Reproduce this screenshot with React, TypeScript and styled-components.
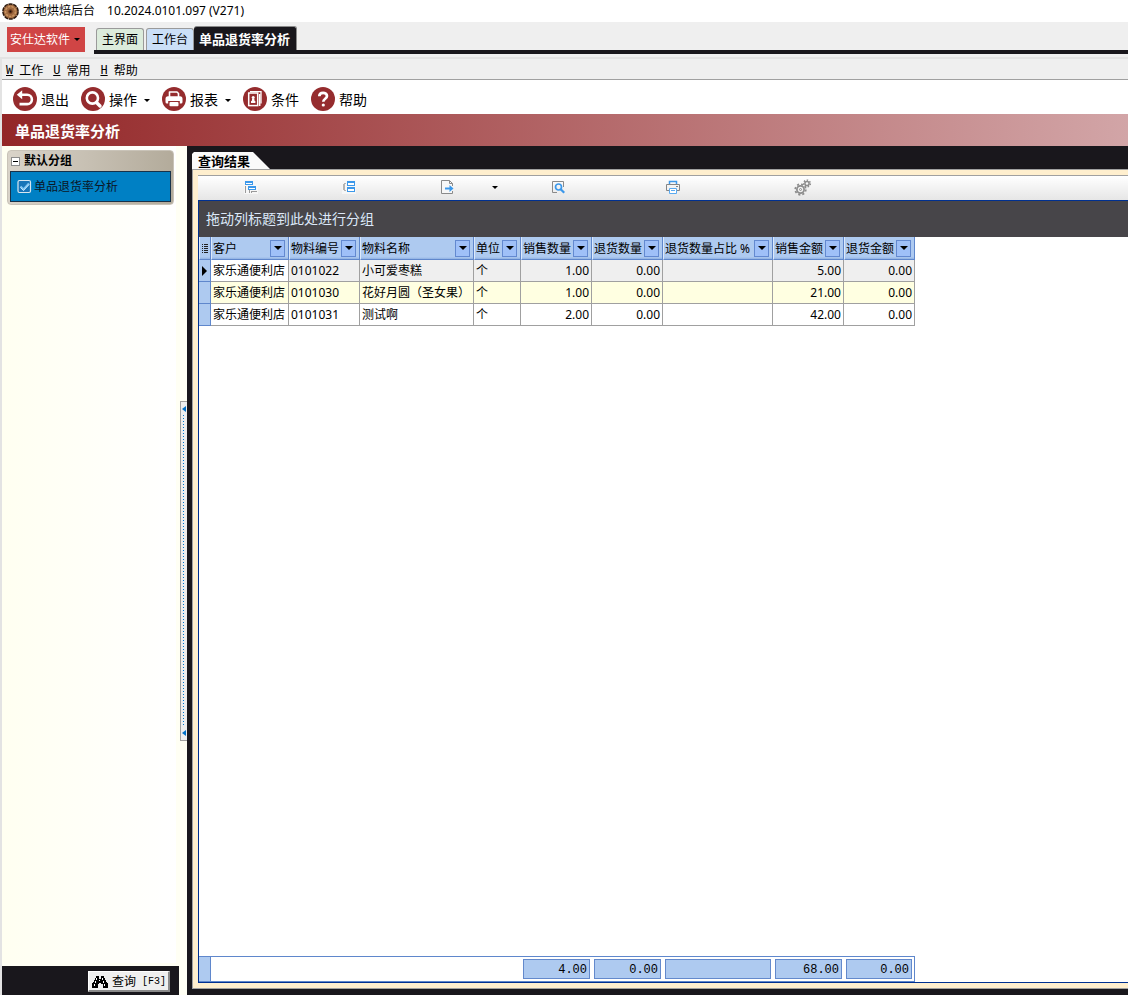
import React from "react";
import styled, { createGlobalStyle } from "styled-components";

const ui = '"Noto Sans", "Noto Sans CJK SC", sans-serif';
const mono = '"Liberation Mono", "Noto Sans CJK SC", monospace';
const ink = "#19171c";

const GlobalStyle = createGlobalStyle`
  *, *::before, *::after { box-sizing: border-box; }
  body { margin: 0; background: #fff; font-family: ${ui}; font-size: 12px; line-height: 16px; color: #000; }
  button { margin: 0; padding: 0; border: 0; background: none; font: inherit; color: inherit; white-space: nowrap; }
  a { color: inherit; text-decoration: none; }
  svg { display: block; flex: none; }
`;

const Window = styled.div`
  display: flex;
  flex-direction: column;
  min-height: 100vh;
  overflow: hidden;
`;

const TitleBar = styled.header`
  display: flex;
  align-items: center;
  gap: 4px;
  height: 22px;
  padding: 0 0 0 2px;
`;

const Version = styled.span`
  margin-left: 8px;
`;

const TabStrip = styled.div`
  display: flex;
  height: 35px;
  background: #efefef;
  padding: 4px 0 3px 7px;
`;

const BrandButton = styled.button`
  display: flex;
  align-items: center;
  gap: 4px;
  height: 25px;
  margin: 1px 9px 0 0;
  padding: 0 5px 0 3px;
  background: #d04545;
  color: #fff;
`;

const Tabs = styled.nav`
  display: flex;
  align-items: flex-end;
  flex: 1;
  gap: 2px;
  padding-left: 2px;
  border-bottom: 4px solid ${ink};
`;

const WindowTab = styled.button<{ $tint: string }>`
  height: 22px;
  width: 48px;
  border: 1px solid #9a9a9a;
  border-bottom: 0;
  border-radius: 3px 3px 0 0;
  background: ${(p) => p.$tint};
`;

const ActiveTab = styled.button`
  height: 24px;
  margin-left: -2px;
  padding: 0 6px 0 5px;
  border-top: 1px solid #8a8a8a;
  border-right: 1px solid #8a8a8a;
  border-radius: 3px 3px 0 0;
  background: ${ink};
  color: #fff;
  font-size: 13px;
  font-weight: 700;
  line-height: 22px;
`;

const Frame = styled.div`
  display: flex;
  flex-direction: column;
  flex: 1;
  border-top: 2px solid #e3e3e3;
  border-left: 2px solid #e3e3e3;
`;

const MenuBar = styled.nav`
  display: flex;
  align-items: center;
  gap: 10px;
  height: 21px;
  padding: 3px 0 0 4px;
  background: #efefef;
  border-bottom: 1px solid #a0a0a0;
`;

const MenuItem = styled.button`
  display: flex;
  align-items: center;
  gap: 6px;

  u { font-family: ${mono}; font-size: 12px; }
`;

const Toolbar = styled.div`
  display: flex;
  align-items: center;
  gap: 12px;
  height: 34px;
  padding: 4px 0 0 11px;
  font-size: 14px;
`;

const ToolButton = styled.button`
  display: flex;
  align-items: center;
  gap: 4px;
  line-height: 20px;

  span { padding-top: 2px; }
`;

const Caret = styled.i<{ $wide?: boolean }>`
  width: 0;
  height: 0;
  border: solid transparent;
  border-width: ${(p) => (p.$wide ? "4px 4px 0" : "3px 3px 0")};
  border-top-color: #000;
`;

const ToolCaret = styled(Caret)`
  margin: 3px 0 0 3px;
`;

const PageTitle = styled.h1`
  margin: 0;
  padding: 0 13px;
  height: 32px;
  line-height: 34px;
  font-size: 15px;
  font-weight: 700;
  color: #fff;
  background: linear-gradient(90deg, #932627, #d2a5a7);
`;

const Body = styled.div`
  display: flex;
  flex: 1;
`;

const Sidebar = styled.aside`
  display: flex;
  width: 185px;
  flex: none;
  background: #fffff4;
`;

const SideColumn = styled.div`
  display: flex;
  flex-direction: column;
  width: 177px;
`;

const SideList = styled.div`
  flex: 1;
  margin: 0 3px 3px 0;
  padding: 4px 2px 0 5px;
  background: linear-gradient(90deg, #fffff1, #ffffff);
`;

const Group = styled.section`
  padding: 0 2px 2px;
  border: 1px solid #c9c3b8;
  border-radius: 4px;
  background: linear-gradient(90deg, #d9d3c9, #b3ab9b);
`;

const GroupHeader = styled.button`
  display: flex;
  align-items: center;
  gap: 4px;
  height: 20px;
  padding-left: 1px;
  font-weight: 700;
`;

const GroupLink = styled.a`
  display: flex;
  align-items: center;
  gap: 2px;
  height: 31px;
  padding-left: 6px;
  border: 1px solid #17324a;
  background: #0080c4;
  color: #0b1626;
`;

const SideFooter = styled.footer`
  display: flex;
  justify-content: flex-end;
  align-items: flex-start;
  height: 29px;
  padding: 5px 9px 0 0;
  background: ${ink};
`;

const QueryButton = styled.button`
  display: flex;
  align-items: center;
  gap: 4px;
  height: 21px;
  padding: 1px 2px 0 3px;
  background: #efefef;
  border: 1px solid #fff;
  border-right: 2px solid #8a8a8a;
  border-bottom: 2px solid #8a8a8a;

  kbd { font-family: ${mono}; font-size: 10px; margin-left: 2px; }
`;

const Splitter = styled.button`
  display: flex;
  flex-direction: column;
  align-items: center;
  align-self: center;
  width: 7px;
  height: 340px;
  margin-left: 1px;
  padding: 4px 0;
  border: 1px solid #a0a0a0;
  border-right: 0;
  background: #efefef;
`;

const SplitDots = styled.span`
  flex: 1;
  width: 1px;
  margin: 3px 1px 3px 0;
  background: repeating-linear-gradient(180deg, #0078d0 0 1px, transparent 1px 3px);
`;

const SplitArrow = styled.i`
  border: solid transparent;
  border-width: 3px 4px 3px 0;
  border-right-color: #0070c8;
`;

const Main = styled.main`
  display: flex;
  flex-direction: column;
  flex: 1;
  min-width: 0;
  padding: 6px 0 6px 5px;
  background: ${ink};
`;

const ResultTab = styled.button`
  align-self: flex-start;
  width: 78px;
  height: 17px;
  padding-left: 6px;
  text-align: left;
  font-size: 13px;
  font-weight: 700;
  background: #fafafa;
  clip-path: polygon(0 2px, 2px 0, 61px 0, 78px 17px, 0 17px);
`;

const Panel = styled.section`
  display: flex;
  flex-direction: column;
  flex: 1;
  padding: 5px 0 5px 5px;
  border: 1px solid #a0a0a0;
  border-right: 0;
  background: #ffefce;
`;

const GridTools = styled.div`
  display: flex;
  align-items: center;
  height: 25px;
  border-top: 1px solid #a0a0a0;
  background: linear-gradient(180deg, #fff, #e6e6e6);
`;

const GridTool = styled.button<{ $gap: number }>`
  display: flex;
  justify-content: center;
  min-width: 8px;
  margin: 0 0 2px ${(p) => p.$gap}px;
`;

const Grid = styled.div`
  display: flex;
  flex-direction: column;
  flex: 1;
  border: 1px solid #003090;
  border-right: 0;
  background: #fff;
`;

const GroupDrop = styled.div`
  height: 36px;
  padding-left: 7px;
  line-height: 36px;
  font-size: 14px;
  color: #dce8f8;
  background: #474549;
`;

const Table = styled.table`
  width: 716px;
  table-layout: fixed;
  border-collapse: separate;
  border-spacing: 0;
`;

const HeadCell = styled.th`
  height: 23px;
  padding: 0 3px 0 1px;
  border-left: 1px solid #dce9fb;
  border-right: 1px solid #5f87cc;
  border-bottom: 1px solid #5f87cc;
  background: linear-gradient(180deg, #aecaf0 20px, #8fb0e2 22px);
  font-weight: 400;
  text-align: left;
`;

const HeadInner = styled.div`
  display: flex;
  align-items: center;
  justify-content: space-between;
  white-space: nowrap;

  span { padding-top: 1px; }
`;

const FilterButton = styled.button`
  display: flex;
  align-items: center;
  justify-content: center;
  flex: none;
  width: 15px;
  height: 17px;
  border: 1px solid #6389d0;
  background: #9fc0f8;
`;

const Marker = styled.td`
  height: 22px;
  padding: 0 0 0 3px;
  border-right: 1px solid #5f87cc;
  border-bottom: 1px solid #5f87cc;
  background: #aecaf0;
`;

const RowArrow = styled.i`
  display: block;
  width: 0;
  border: solid transparent;
  border-width: 5px 0 5px 5px;
  border-left-color: #000;
`;

const Row = styled.tr<{ $tone: string }>`
  background: ${(p) => p.$tone};
`;

const Cell = styled.td<{ $num?: boolean; $focus?: boolean }>`
  height: 22px;
  padding: 0 2px;
  border-right: 1px solid #a0a0a0;
  border-bottom: 1px solid #a0a0a0;
  text-align: ${(p) => (p.$num ? "right" : "left")};
  white-space: nowrap;
  overflow: hidden;
  ${(p) => p.$focus && "background: #fff;"}
`;

const Totals = styled(Table)`
  margin-top: auto;
  border: solid #5f87cc;
  border-width: 1px 0;
`;

const TotalMarker = styled.td`
  border-right: 1px solid #5f87cc;
  background: #aecaf0;
`;

const TotalCell = styled.td`
  height: 24px;
  padding: 0 2px;

  &:last-child { border-right: 1px solid #5f87cc; }
`;

const Total = styled.output`
  display: block;
  height: 20px;
  padding-right: 2px;
  border: 1px solid #6389cc;
  background: #aecaf0;
  font-family: ${mono};
  line-height: 20px;
  text-align: right;
`;

const columns = [
  { title: "客户", width: 78 },
  { title: "物料编号", width: 71 },
  { title: "物料名称", width: 114 },
  { title: "单位", width: 47 },
  { title: "销售数量", width: 71, total: "4.00" },
  { title: "退货数量", width: 71, total: "0.00" },
  { title: "退货数量占比 %", width: 110, total: "" },
  { title: "销售金额", width: 71, total: "68.00" },
  { title: "退货金额", width: 71, total: "0.00" },
];

const rows = [
  { tone: "#efefef", cells: ["家乐通便利店", "0101022", "小可爱枣糕", "个", "1.00", "0.00", "", "5.00", "0.00"] },
  { tone: "#ffffe1", cells: ["家乐通便利店", "0101030", "花好月圆（圣女果）", "个", "1.00", "0.00", "", "21.00", "0.00"] },
  { tone: "#ffffff", cells: ["家乐通便利店", "0101031", "测试啊", "个", "2.00", "0.00", "", "42.00", "0.00"] },
];

const Columns = () => (
  <colgroup>
    <col width={12} />
    {columns.map((c) => (
      <col key={c.title} width={c.width} />
    ))}
  </colgroup>
);

const BreadIcon = () => (
  <svg width="17" height="17" viewBox="0 0 17 17">
    <circle cx="8.5" cy="8.5" r="7.6" fill="#a06a40" stroke="#2a170c" strokeWidth="1.5" strokeDasharray="4 .8" />
    <circle cx="8.5" cy="8.5" r="5" fill="none" stroke="#c8935f" strokeWidth="1.6" strokeDasharray="2.4 1" />
    <circle cx="8.5" cy="8.5" r="2.2" fill="#6b3a1c" />
    <circle cx="8.5" cy="8.5" r=".9" fill="#1c0d05" />
  </svg>
);

const Disc = ({ children }: { children: React.ReactNode }) => (
  <svg width="24" height="24" viewBox="0 0 24 24" fill="none">
    <circle cx="12" cy="12" r="12" fill="#952c2e" />
    {children}
  </svg>
);

const BackIcon = () => (
  <Disc>
    <path d="M8 7.7h6.200a4.700 4.700 0 0 1 0 9.400H6.500" stroke="#fff" strokeWidth="2.6" />
    <path d="M3.800 7.700l5.400-4.500v9z" fill="#fff" />
  </Disc>
);

const SearchIcon = () => (
  <Disc>
    <circle cx="11.4" cy="11" r="5.6" stroke="#fff" strokeWidth="2.6" />
    <path d="M15.500 15.500l3.500 3.500" stroke="#fff" strokeWidth="3.4" strokeLinecap="round" />
  </Disc>
);

const PrinterIcon = () => (
  <Disc>
    <path d="M7.500 10V5h7.500l1.500 1.500V10" stroke="#fff" strokeWidth="1.600" strokeLinejoin="round" />
    <path d="M6 9.200h12a2.500 2.500 0 0 1 2.500 2.500V15a1.500 1.500 0 0 1-1.500 1.500h-1.200V14H6.200v2.500H5A1.500 1.500 0 0 1 3.500 15v-3.300A2.500 2.500 0 0 1 6 9.200z" fill="#fff" />
    <rect x="7.500" y="15" width="9" height="4.200" rx="1" fill="#fff" />
  </Disc>
);

const CardIcon = () => (
  <Disc>
    <rect x="5.700" y="6" width="9" height="12.600" stroke="#fff" strokeWidth="1.500" />
    <path d="M7 4.600h11v12" stroke="#fff" strokeWidth="1.300" />
    <path d="M16.700 7v12" stroke="#fff" strokeWidth="1.500" />
    <circle cx="10.200" cy="10.400" r="1.500" fill="#fff" />
    <path d="M9 12h2.400v1.500l1 .8V16H8v-1.700l1-.8z" fill="#fff" />
  </Disc>
);

const HelpIcon = () => (
  <Disc>
    <path d="M8.300 9.200C8.300 4.700 16 4.900 16 9c0 2.800-3.700 2.700-3.700 5.700" stroke="#fff" strokeWidth="2.700" />
    <circle cx="12.300" cy="18" r="1.600" fill="#fff" />
  </Disc>
);

const MinusBox = () => (
  <svg width="9" height="9" viewBox="0 0 9 9" shapeRendering="crispEdges">
    <rect x=".5" y=".5" width="8" height="8" fill="#fff" stroke="#8c8c8c" />
    <path d="M2 4.500h5" stroke="#000" />
  </svg>
);

const CheckIcon = () => (
  <svg width="15" height="15" viewBox="0 0 15 15" fill="none">
    <rect x="1" y="1.500" width="12.500" height="12" rx="1.500" fill="#1874b8" stroke="#d9e6ef" strokeWidth="1.200" />
    <path d="M3.500 7.500l3 3 5.500-6" stroke="#7cc4f4" strokeWidth="2.200" />
    <path d="M3.500 8.500l3 3 5.500-6" stroke="#e8f4fc" strokeWidth=".7" />
  </svg>
);

const BinocularsIcon = () => (
  <svg width="16" height="14" viewBox="0 0 16 14" shapeRendering="crispEdges">
    <path d="M4 1h3v3h2V1h3v2h1v2h1v2h1v1h1v5h-5V9H9V8H7v1H6v4H0V8h1V7h1V5h1V3h1z" fill="#000" />
    <path d="M4.500 3v2M3.500 6v2M2.500 9v2M10.500 3v2M11.500 6v2M12.500 9v2M7.500 5v1" stroke="#fff" />
  </svg>
);

const ExpandIcon = () => (
  <svg width="16" height="16" viewBox="0 0 16 16" shapeRendering="crispEdges">
    <path d="M1 1h14v14H1z" fill="#f7f7f7" />
    <path d="M2 2h8v4H2zM5 7h8v4H5z" fill="#3c98ea" />
    <path d="M3 4h6v1H3zM6 9h6v1H6z" fill="#fff" />
    <path d="M2 7h1v7H2zM6 11h1v3H6zM9 12h5v1H9zM8 12h1v2H8z" fill="#9a9a9a" />
  </svg>
);

const CollapseIcon = () => (
  <svg width="16" height="16" viewBox="0 0 16 16" shapeRendering="crispEdges">
    <path d="M1 1h14v14H1z" fill="#f7f7f7" />
    <path d="M6 2h8v5H6zM6 8h8v5H6z" fill="#3c98ea" />
    <path d="M7 4h6v2H7zM7 10h6v2H7z" fill="#fff" />
    <path d="M3 4h2v1H4v6h1v1H3V11H2V5h1z" fill="#b4b4b4" />
  </svg>
);

const ExportIcon = () => (
  <svg width="16" height="16" viewBox="0 0 16 16" fill="none">
    <path d="M13.500 7V4.500l-3-3h-8v13h11V12" fill="#f7f7f7" stroke="#8a8a8a" />
    <path d="M10.500 1.500v3h3" stroke="#8a8a8a" />
    <path d="M6 9.500h6" stroke="#3c98ea" strokeWidth="2" />
    <path d="M10.500 6l4 3.500-4 3.500z" fill="#3c98ea" />
  </svg>
);

const PreviewIcon = () => (
  <svg width="16" height="16" viewBox="0 0 16 16" fill="none">
    <path d="M13.500 8V2.500h-11v11H7" stroke="#8a8a8a" />
    <circle cx="8.500" cy="8" r="3" stroke="#3c98ea" strokeWidth="1.700" />
    <path d="M10.700 10.200l3.500 3.500" stroke="#3c98ea" strokeWidth="2.200" />
  </svg>
);

const PrintIcon = () => (
  <svg width="16" height="16" viewBox="0 0 16 16" fill="none">
    <path d="M4.500 5V2.500h7V5" stroke="#3c98ea" strokeWidth="1.500" />
    <path d="M4 11.500H1.500v-6h13v6H12" stroke="#858585" />
    <path d="M4.500 9.500h7v5h-7z" fill="#fff" stroke="#5aaaf0" />
    <path d="M6 11.500h4" stroke="#5aaaf0" />
    <path d="M11 7.500h2" stroke="#858585" />
  </svg>
);

const GearsIcon = () => (
  <svg width="18" height="17" viewBox="0 0 18 17" fill="none" stroke="#8c8c8c">
    <circle cx="6.500" cy="10.500" r="3.600" strokeWidth="1.700" />
    <circle cx="6.500" cy="10.500" r="5.300" strokeWidth="1.700" strokeDasharray="2.100 2.060" />
    <circle cx="6.500" cy="10.500" r="1" />
    <circle cx="13" cy="4.500" r="2.100" strokeWidth="1.500" />
    <circle cx="13" cy="4.500" r="3.400" strokeWidth="1.400" strokeDasharray="1.500 1.550" />
  </svg>
);

const ListGlyph = () => (
  <svg width="8" height="11" viewBox="0 0 8 11" shapeRendering="crispEdges">
    <path d="M1 1.500h1M3 1.500h4M1 3.500h1M3 3.500h4M1 5.500h1M3 5.500h4M1 7.500h1M3 7.500h4M1 9.500h1M3 9.500h4" stroke="#222" />
  </svg>
);

const menus = [
  ["W", "工作"],
  ["U", "常用"],
  ["H", "帮助"],
];

const tools = [
  { label: "退出", icon: <BackIcon /> },
  { label: "操作", icon: <SearchIcon />, menu: true },
  { label: "报表", icon: <PrinterIcon />, menu: true },
  { label: "条件", icon: <CardIcon /> },
  { label: "帮助", icon: <HelpIcon /> },
];

const gridTools = [
  { name: "展开", gap: 45, icon: <ExpandIcon /> },
  { name: "收起", gap: 82, icon: <CollapseIcon /> },
  { name: "导出", gap: 82, icon: <ExportIcon /> },
  { name: "导出选项", gap: 36, icon: <Caret /> },
  { name: "预览", gap: 51, icon: <PreviewIcon /> },
  { name: "打印", gap: 99, icon: <PrintIcon /> },
  { name: "设置", gap: 113, icon: <GearsIcon /> },
];

export default function App() {
  return (
    <Window>
      <GlobalStyle />
      <TitleBar>
        <BreadIcon />
        <span>本地烘焙后台</span>
        <Version>10.2024.0101.097 (V271)</Version>
      </TitleBar>
      <TabStrip>
        <BrandButton type="button">
          安仕达软件
          <Caret />
        </BrandButton>
        <Tabs>
          <WindowTab type="button" $tint="#dcecdc">主界面</WindowTab>
          <WindowTab type="button" $tint="#cbdff7">工作台</WindowTab>
          <ActiveTab type="button">单品退货率分析</ActiveTab>
        </Tabs>
      </TabStrip>
      <Frame>
        <MenuBar>
          {menus.map(([key, label]) => (
            <MenuItem type="button" key={key}>
              <u>{key}</u>
              {label}
            </MenuItem>
          ))}
        </MenuBar>
        <Toolbar>
          {tools.map((t) => (
            <ToolButton type="button" key={t.label}>
              {t.icon}
              <span>{t.label}</span>
              {t.menu && <ToolCaret />}
            </ToolButton>
          ))}
        </Toolbar>
        <PageTitle>单品退货率分析</PageTitle>
        <Body>
          <Sidebar>
            <SideColumn>
              <SideList>
                <Group>
                  <GroupHeader type="button">
                    <MinusBox />
                    默认分组
                  </GroupHeader>
                  <GroupLink href="#report">
                    <CheckIcon />
                    单品退货率分析
                  </GroupLink>
                </Group>
              </SideList>
              <SideFooter>
                <QueryButton type="button">
                  <BinocularsIcon />
                  查询
                  <kbd>[F3]</kbd>
                </QueryButton>
              </SideFooter>
            </SideColumn>
            <Splitter type="button" aria-label="折叠">
              <SplitArrow />
              <SplitDots />
              <SplitArrow />
            </Splitter>
          </Sidebar>
          <Main>
            <ResultTab type="button">查询结果</ResultTab>
            <Panel>
              <GridTools>
                {gridTools.map((t) => (
                  <GridTool type="button" key={t.name} aria-label={t.name} $gap={t.gap}>
                    {t.icon}
                  </GridTool>
                ))}
              </GridTools>
              <Grid>
                <GroupDrop>拖动列标题到此处进行分组</GroupDrop>
                <Table>
                  <Columns />
                  <thead>
                    <tr>
                      <HeadCell>
                        <ListGlyph />
                      </HeadCell>
                      {columns.map((c) => (
                        <HeadCell key={c.title} scope="col">
                          <HeadInner>
                            <span>{c.title}</span>
                            <FilterButton type="button" aria-label={c.title}>
                              <Caret $wide />
                            </FilterButton>
                          </HeadInner>
                        </HeadCell>
                      ))}
                    </tr>
                  </thead>
                  <tbody>
                    {rows.map((r, i) => (
                      <Row key={r.cells[1]} $tone={r.tone}>
                        <Marker>{i === 0 && <RowArrow />}</Marker>
                        {r.cells.map((value, j) => (
                          <Cell key={columns[j].title} $num={j > 3} $focus={i === 0 && j === 0}>
                            {value}
                          </Cell>
                        ))}
                      </Row>
                    ))}
                  </tbody>
                </Table>
                <Totals>
                  <Columns />
                  <tbody>
                    <tr>
                      <TotalMarker />
                      {columns.map((c) => (
                        <TotalCell key={c.title}>{c.total !== undefined && <Total>{c.total}</Total>}</TotalCell>
                      ))}
                    </tr>
                  </tbody>
                </Totals>
              </Grid>
            </Panel>
          </Main>
        </Body>
      </Frame>
    </Window>
  );
}
